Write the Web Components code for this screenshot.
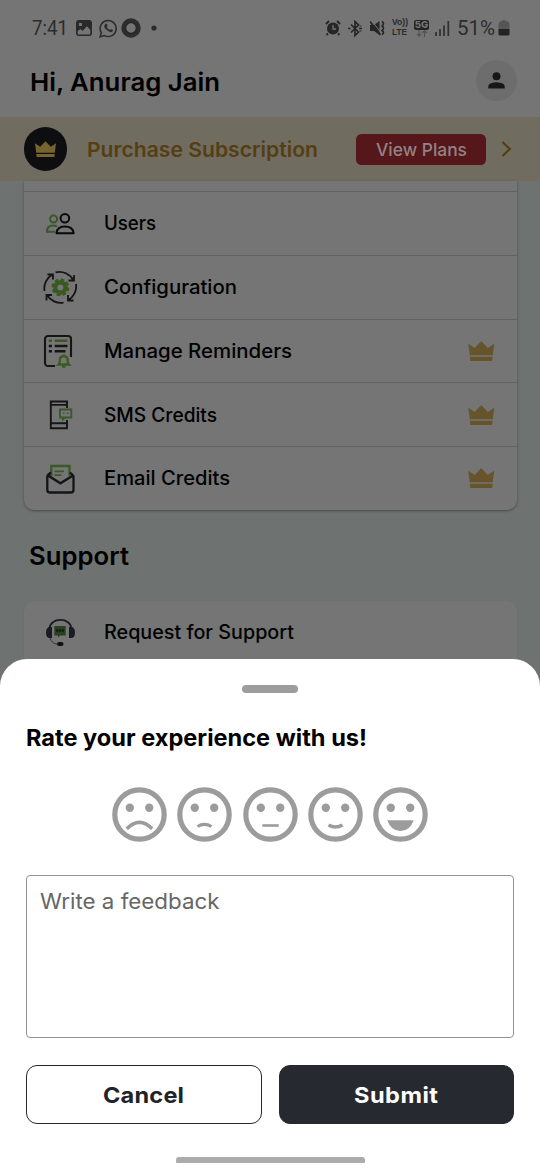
<!DOCTYPE html>
<html lang="en">
<head>
<meta charset="utf-8">
<title>Rate your experience</title>
<style>
body{margin:0;font-family:Inter,"Liberation Sans",sans-serif;color:#000;background:#fff}
</style>
</head>
<body>
<app-screen></app-screen>
<script>
const define=(name,html,setup)=>customElements.define(name,class extends HTMLElement{
  connectedCallback(){
    if(this.shadowRoot)return;
    const root=this.attachShadow({mode:'open'});
    const t=document.createElement('template');
    t.innerHTML=typeof html==='function'?html(this):html;
    root.append(t.content.cloneNode(true));
    if(setup)setup(this,root);
  }
});

/* Text fitted to a given width: glyphs are widened a little, tracking takes the rest */
define('fit-label',`<style>:host{display:block;white-space:nowrap;flex:none}span{display:inline-block;transform-origin:0 50%}</style><span><slot></slot></span>`,(el,root)=>{
  const w=+el.getAttribute('w'),s=root.querySelector('span'),n=el.textContent.length;
  el.style.width=w+'px';
  const natural=s.getBoundingClientRect().width;
  const scale=Math.max(.9,Math.min(1.07,w/natural));
  s.style.letterSpacing=(w/scale-natural)/(n-1)+'px';
  s.style.transform=`scaleX(${scale})`;
});

const K='#151518',G='#3b5629';
const icons={
users:`<g fill="none" stroke-width="2"><g stroke="${G}"><circle cx="10.6" cy="13" r="3.5"/><path d="M12 25.7H4q0-6.2 6-6.2 2.300 0 4 1"/></g><g stroke="#09090b"><circle cx="21.9" cy="12.200" r="4.300"/><path d="M13.500 27.200q.5-6.600 8.400-6.600t8.800 6.600z" stroke-linejoin="round"/></g></g>`,
config:`<g fill="none" stroke="${K}" stroke-width="1.800"><path d="M1.500 21A16 16 0 0 1 9.500 4.500M4.500 4.500H10V9.500M12.500 2.300A16 16 0 0 1 30.500 10.500M31 5V10.500H25.500M33 14A16 16 0 0 1 25 30.300M25 25V30.500H30.500M20.500 32.600A16 16 0 0 1 4 25M3.500 30.500V25H9"/></g><g stroke="#385a1e" fill="none"><circle cx="17.400" cy="17.400" r="5.100" stroke-width="4.300"/><circle cx="17.400" cy="17.400" r="7.600" stroke-width="2.600" stroke-dasharray="3.700 2.270"/></g>`,
reminders:`<path d="M12 32H5a3 3 0 0 1-3-3V5a3 3 0 0 1 3-3H25a3 3 0 0 1 3 3V23" fill="none" stroke="${K}" stroke-width="2.100"/><g stroke-width="2.400"><path d="M5.800 6.800H9M11.700 6.800H24.500" stroke="${G}"/><path d="M5.800 12H9M11.700 12H24.500M5.800 17.300H9M11.700 17.300H22.500" stroke="${K}"/></g><path d="M15.500 30.500q1.300-1.200 1.300-3.500v-1q0-3.800 3.900-3.800t3.900 3.800v1q0 2.300 1.300 3.500zM19 32.500h3.400M20.700 20.500v2" fill="none" stroke="#3b5b21" stroke-width="2.300"/>`,
sms:`<path d="M24 10V3.500H7.800V30.300H24V22M7.800 6.900H24M7.800 25.200H24" fill="none" stroke="${K}" stroke-width="1.900"/><path d="M17 11.500H28.300V19.500H22l-2 1.800v-1.800H17z" fill="none" stroke="#3a572c" stroke-width="1.900"/><path d="M20 15.300h1.700M23.800 15.300h1.700" stroke="#3a572c" stroke-width="1.600"/>`,
email:`<path d="M8.300 15V5H26.500V15" fill="none" stroke="#3b5a27" stroke-width="2.400"/><path d="M11.500 10.400h9.500M11.500 14.200h7" stroke="${G}" stroke-width="1.800"/><path d="M8 11.500 5 14q-.7.600-.7 1.700V28.700q0 2.800 2.800 2.800H27.700q2.800 0 2.800-2.800V15.700q0-1.100-.7-1.700L27 11.500M5 14.500 17.400 22.300 30 14.500" fill="none" stroke="${K}" stroke-width="2.300"/>`,
support:`<path d="M6.500 14C6.500 1.800 28.300 1.800 28.300 14" fill="none" stroke="#1b1b22" stroke-width="1.900"/><path d="M9 12v11H7q-4 0-4-5.500T7 12zM26 12v11h2q4 0 4-5.500T28 12z" fill="#1b1b22"/><path d="M7 23q1.500 5.500 7 6" fill="none" stroke="#333" stroke-width="1"/><rect x="14" y="27" width="6.500" height="4" rx="2" fill="#111"/><path d="M11.300 11H22.700V20.500H17l-2 2.200v-2.200H11.300z" fill="#27401d"/><path d="M13.300 15.500h7.500" stroke="#101810" stroke-width="2.600" stroke-dasharray="1.900 .9"/>`
};
const crown=(w,h,c)=>`<svg width="${w}" height="${h}" viewBox="0 0 26 20" fill="${c}" style="display:block;flex:none"><path d="M0 2.700 6.500 7 13 0l6.500 7L26 2.700 24.500 14.200H1.500zM1.500 15.800H24.500L24 19.500q-.1.500-.8.500H2.800q-.7 0-.8-.5z"/></svg>`;

define('menu-row',el=>`<style>:host{display:flex;box-sizing:border-box;height:63.750px;align-items:center;padding:0 22px 0 19.500px;border-top:1px solid #626262;font-size:19.500px;font-weight:450}
.i{width:34px;height:34px;display:block;margin-right:27px;flex:none}.c{margin-left:auto}</style>
<svg class="i" viewBox="0 0 34 34">${icons[el.getAttribute('icon')]}</svg><slot></slot>${el.hasAttribute('premium')?`<div class="c">${crown(26.500,20,'#66552a')}</div>`:''}`);

define('status-bar',`<style>:host{display:flex;height:56px;box-sizing:border-box;align-items:center;padding:0 30.500px 0 32px;color:#2c2c2c;font-family:Roboto,sans-serif;font-size:20px;font-weight:300}
svg{display:block;flex:none}.time,.pct{font-weight:370}
.volte{font:bold 8.800px/9.900px "Liberation Sans",sans-serif;width:17px;margin-left:7px}.net{margin-left:5px;width:16px;display:flex;flex-direction:column;align-items:center}.net b{font:800 9.500px/10px Inter,sans-serif;background:#242424;color:#757575;border-radius:2px;width:15.500px;text-align:center}</style>
<fit-label class="time" w="36">7:41</fit-label>
<svg width="16" height="16" viewBox="0 0 16 16" style="margin-left:8px"><path fill="#292929" fill-rule="evenodd" d="M3 0H13a3 3 0 0 1 3 3V13a3 3 0 0 1-3 3H3a3 3 0 0 1-3-3V3a3 3 0 0 1 3-3zM1.700 11V13.500q0 1 1 1H13.300q1 0 1-1V10L11 6.200 6.500 11 4.500 9zM3 3v3h3V3z"/></svg>
<svg width="19" height="19" viewBox="0 0 19 19" style="margin-left:6.500px"><path d="M1.200 17.800 2.300 13.600A8 8 0 1 1 5.500 16.600z" fill="none" stroke="#2d2d2d" stroke-width="1.600"/><path d="M6.300 5q1-1 1.600.2l.7 1.600-.8 1.200q1 2 3 2.900l1.200-1 2 1.100q.5 1-1.300 2.100-2 .7-5-2T5.300 7.300Q5.400 5.700 6.300 5z" fill="#2d2d2d"/></svg>
<svg width="20" height="20" viewBox="0 0 20 20" style="margin-left:3.500px"><circle cx="10" cy="10" r="7.200" fill="none" stroke="#2a2a2a" stroke-width="5"/><circle cx="10" cy="10" r="8" fill="none" stroke="#393939" stroke-width=".6"/></svg>
<svg width="6" height="6" style="margin:0 auto 0 10px"><circle cx="3" cy="3" r="2.600" fill="#2c2c2c"/></svg>
<svg width="16" height="16" viewBox="0 0 16 16"><circle cx="8" cy="8.500" r="6" fill="#262626"/><path d="M1 4 4 1M15 4 12 1M3 13.500 1.500 15M13 13.500l1.500 1.500" stroke="#262626" stroke-width="1.800"/><path d="M8 5v4h3" fill="none" stroke="#757575" stroke-width="1.300"/></svg>
<svg width="14" height="17" viewBox="0 0 14 17" style="margin-left:7px"><path d="M3 4.500 10.500 12 7 15.500V1.500L10.500 5 3 12.500" fill="none" stroke="#262626" stroke-width="1.700"/><path d="M0 8.500h2.500M11 8.500h3M12.500 5.500v1M12.500 10.500v1" stroke="#262626" stroke-width="1.700"/></svg>
<svg width="15" height="16" viewBox="0 0 15 16" style="margin-left:8px"><path d="M0 5h4l5.500-4V15L4 11H0z" fill="#262626"/><path d="M1.300 0 12 14" stroke="#757575" stroke-width="1"/><path d="M0 1.500 10.500 15" stroke="#262626" stroke-width="1.700"/><path d="M12 1.500q3 2 0 4.500 3 2 0 4.500 3 2 0 4" fill="none" stroke="#262626" stroke-width="1.600"/></svg>
<div class="volte"><fit-label w="16">Vo))</fit-label><fit-label w="15">LTE</fit-label></div>
<div class="net"><b>5G</b><svg width="12" height="7" viewBox="0 0 12 7"><path d="M3 0V6M1 4l2 2 2-2M8.500 7V1M6 3l2.500-2.300L11 3" fill="none" stroke="#535353" stroke-width="1.200"/></svg></div>
<svg width="15" height="16" viewBox="0 0 15 16" style="margin-left:5px"><path d="M1 12v4M5 9v7M9 5.500V16M13.300 1V16" stroke="#303030" stroke-width="1.700"/></svg>
<fit-label class="pct" w="38" style="margin-left:7.500px">51%</fit-label>
<svg width="12" height="16" viewBox="0 0 12 16" style="margin-left:2.500px"><path d="M3.500 1Q6-1 8.500 1q3 1 3 3V9H.5V4q0-2 3-3z" fill="#555"/><path d="M.5 9h11v5q0 1.500-1.500 1.500H2Q.5 15.500.5 14z" fill="#232323"/></svg>`);

define('profile-header',`<style>:host{display:flex;height:61px;box-sizing:border-box;padding:0 23px 12px 30px;align-items:center;justify-content:space-between;font-size:24.500px;font-weight:600}
fit-label{padding-top:2px}
.a{width:41px;height:41px;border-radius:50%;background:#6d6d6d;display:grid;place-items:center}</style>
<fit-label w="190">Hi, Anurag Jain</fit-label><div class="a"><svg width="17" height="17" viewBox="0 0 17 17" fill="#171717"><circle cx="8.500" cy="4.300" r="4"/><path d="M.3 16.500v-2q0-4 8.200-4.300 8.200.3 8.200 4.300v2z"/></svg></div>`);

define('plan-banner',`<style>:host{display:flex;height:64px;box-sizing:border-box;align-items:center;padding:0 28px 0 23.500px;background:#706c60;color:#553e13;font-size:20.500px;font-weight:600}
.c{width:43.500px;height:43.500px;border-radius:50%;background:#0e0d0f;display:grid;place-items:center;margin-right:20px}
.b{margin-left:auto;width:130px;height:31px;border-radius:5.500px;background:#551719;color:#918385;font-size:17.500px;font-weight:500;display:grid;place-items:center;margin-right:15px}svg{display:block}</style>
<div class="c">${crown(21,16.500,'#756430')}</div><fit-label w="231">Purchase Subscription</fit-label><div class="b"><fit-label w="91">View Plans</fit-label></div>
<svg width="11" height="18" viewBox="0 0 11 18"><path d="M1.500 2 8.800 9 1.500 16" fill="none" stroke="#553e13" stroke-width="2.200"/></svg>`);

define('menu-card',`<style>:host{display:block;margin:0 23.500px;background:#757575;border-radius:0 0 10px 10px;box-shadow:0 1px 2.500px #454848;overflow:hidden}</style><slot></slot>`);

const mouths=[
'<path d="M-12.700 14.300Q0 1.500 12.700 14.300" stroke-width="3.600"/>',
'<path d="M-7 12Q0 7.700 7 12" stroke-width="3.200"/>',
'<path d="M-8.200 11H8.200" stroke-width="2.600"/>',
'<path d="M-7 10.500Q0 14.500 7 10.500" stroke-width="3.600"/>',
'<path d="M-13.200 5.700H13.200Q9.500 16.500 0 16.500T-13.200 5.700z" fill="#9c9c9c" stroke="none"/>'];
define('mood-face',el=>`<style>:host{display:block;width:55px;height:55px}svg{display:block}</style><svg width="55" height="55" viewBox="-27.500 -27.500 55 55" fill="none" stroke="#9c9c9c"><circle r="24.700" stroke-width="5.200"/><g fill="#9c9c9c" stroke="none"><circle cx="-9.700" cy="-6.800" r="4.200"/><circle cx="9.700" cy="-6.800" r="4.200"/></g>${mouths[+el.getAttribute('level')-1]}</svg>`);

define('action-button',`<style>:host{display:grid;place-items:center;box-sizing:border-box;flex:1;height:59px;padding-top:1px;border:1.500px solid #26282f;border-radius:11px;font-size:22px;font-weight:700;color:#20232a}:host([primary]){background:#262930;color:#fff}</style><slot></slot>`);

define('rating-sheet',`<style>:host{position:absolute;left:0;right:0;top:659px;bottom:0;background:#fff;border-radius:27px 27px 0 0;box-sizing:border-box;padding:26px 26px 0;display:flex;flex-direction:column}
.h{width:56px;height:8px;border-radius:4px;background:#9d9d9d;align-self:center;flex:none}
.t{font-size:22.500px;line-height:30px;font-weight:700;margin-top:30px}
.m{display:flex;justify-content:center;gap:10.400px;margin-top:33.500px}
.f{box-sizing:border-box;height:163px;flex:none;border:1.300px solid #949494;border-radius:4px;margin-top:33px;padding:11.500px 13px;font-size:21.500px;line-height:28px;color:#666}
.b{display:flex;gap:17px;margin-top:27px}
.n{width:189px;height:6px;border-radius:3px 3px 1px 1px;background:#acacac;align-self:center;margin-top:33.500px}</style>
<div class="h"></div><fit-label class="t" w="341">Rate your experience with us!</fit-label>
<div class="m"><mood-face level="1"></mood-face><mood-face level="2"></mood-face><mood-face level="3"></mood-face><mood-face level="4"></mood-face><mood-face level="5"></mood-face></div>
<div class="f"><fit-label w="179.500">Write a feedback</fit-label></div>
<div class="b"><action-button><fit-label w="81">Cancel</fit-label></action-button><action-button primary><fit-label w="84">Submit</fit-label></action-button></div><div class="n"></div>`);

define('app-screen',`<style>:host{display:block;position:relative;width:540px;height:1170px;overflow:hidden;background:#6e7271}
.top{background:#757575}.gap{height:10px}
.s{margin:28px 0 0 29px;font-size:25px;line-height:36px;font-weight:600}
.card2{margin-top:27.500px;border-radius:10px;height:90px;box-shadow:0 1px 2px #646767}.card2 menu-row{border-top-color:transparent;height:60px}</style>
<div class="top"><status-bar></status-bar><profile-header></profile-header></div><plan-banner></plan-banner>
<menu-card><div class="gap"></div>
<menu-row icon="users"><fit-label w="52">Users</fit-label></menu-row>
<menu-row icon="config"><fit-label w="133">Configuration</fit-label></menu-row>
<menu-row icon="reminders" premium><fit-label w="188">Manage Reminders</fit-label></menu-row>
<menu-row icon="sms" premium><fit-label w="113">SMS Credits</fit-label></menu-row>
<menu-row icon="email" premium><fit-label w="126">Email Credits</fit-label></menu-row></menu-card>
<fit-label class="s" w="100">Support</fit-label>
<menu-card class="card2"><menu-row icon="support"><fit-label w="190">Request for Support</fit-label></menu-row></menu-card>
<rating-sheet></rating-sheet>`);
</script>
</body>
</html>
